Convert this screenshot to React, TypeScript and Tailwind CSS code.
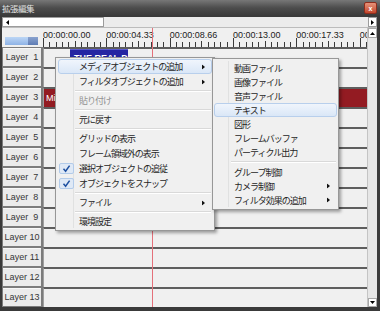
import React from "react";

type Item =
  | "sep"
  | { t: string; sub?: boolean; hl?: boolean; dis?: boolean; chk?: boolean };

const mainItems: Item[] = [
  { t: "メディアオブジェクトの追加", sub: true, hl: true },
  { t: "フィルタオブジェクトの追加", sub: true },
  "sep",
  { t: "貼り付け", dis: true },
  "sep",
  { t: "元に戻す" },
  "sep",
  { t: "グリッドの表示" },
  { t: "フレーム領域外の表示" },
  { t: "選択オブジェクトの追従", chk: true },
  { t: "オブジェクトをスナップ", chk: true },
  "sep",
  { t: "ファイル", sub: true },
  "sep",
  { t: "環境設定" },
];

const subItems: Item[] = [
  { t: "動画ファイル" },
  { t: "画像ファイル" },
  { t: "音声ファイル" },
  { t: "テキスト", hl: true },
  { t: "図形" },
  { t: "フレームバッファ" },
  { t: "パーティクル出力" },
  "sep",
  { t: "グループ制御" },
  { t: "カメラ制御", sub: true },
  { t: "フィルタ効果の追加", sub: true },
];

function Arrow() {
  return (
    <svg width="3" height="5" className="absolute right-[6px] top-1/2 -translate-y-1/2">
      <polygon points="0,0 3,2.5 0,5" fill="#111" />
    </svg>
  );
}

function Check() {
  return (
    <div className="absolute left-0 top-[1px] bottom-[1px] w-[15px] rounded-[2px] bg-[#dfe9f6] border border-[#b2cbea] flex items-center justify-center">
      <svg width="9" height="9" viewBox="0 0 9 9">
        <path d="M1.5 4.8 L3.6 7.2 L7.6 1.6" stroke="#1d4fa0" strokeWidth="1.5" fill="none" />
      </svg>
    </div>
  );
}

function MenuList({ items, h, sepH, pl, gutter }: { items: Item[]; h: string; sepH: string; pl: string; gutter: string }) {
  return (
    <>
      <div className={`absolute ${gutter} top-[2px] bottom-[2px] w-[1px] bg-[#e0e1e1]`} />
      {items.map((it, i) =>
        it === "sep" ? (
          <div key={i} className={`relative ${sepH} flex items-center ml-[17px] mr-[1px]`}>
            <div className="w-full h-[1px] bg-[#d9d9d9] border-b border-white box-content" />
          </div>
        ) : (
          <div
            key={i}
            className={`relative ${h} flex items-center ${pl} whitespace-nowrap ${
              it.hl ? "bg-gradient-to-b from-[#f0f5fc] to-[#dae7f7] border border-[#b8cfec] rounded-[3px]" : "border border-transparent"
            } ${it.dis ? "text-[#939393]" : "text-[#262626]"}`}
          >
            {it.chk && <Check />}
            <span className="text-[9px] leading-none tracking-[-1px]">{it.t}</span>
            {it.sub && <Arrow />}
          </div>
        )
      )}
    </>
  );
}

const labels = ["00:00:00.00", "00:00:04.33", "00:00:08.66", "00:00:13.00", "00:00:17.33", "00:00:21.66"];

function Ticks() {
  const lines = [];
  for (let i = 0; i <= 52; i++) {
    const x = Math.round(i * 6.333) + 0.5;
    const major = i % 10 === 0;
    const mid = i % 5 === 0;
    lines.push(<line key={i} x1={x} x2={x} y1={major ? 10 : mid ? 13 : 14} y2={19} stroke="#3a3a3a" strokeWidth="1" />);
  }
  return (
    <svg width="324" height="19" className="absolute left-0 top-0">
      {lines}
    </svg>
  );
}

export default function App() {
  const layers = Array.from({ length: 13 }, (_, i) => i + 1);
  return (
    <div className="w-[380px] h-[311px] relative overflow-hidden bg-[#3a3a3a] flex flex-col font-['Liberation_Sans',Arial,sans-serif]">
      {/* title bar */}
      <div className="h-[16px] shrink-0 flex items-center bg-gradient-to-b from-[#777777] via-[#4c4c4c] to-[#3a3a3a]">
        <span className="ml-[2px] text-[8.5px] leading-none text-[#e2e2e2] font-['Noto_Sans_CJK_JP',sans-serif] tracking-[-0.5px]">
          拡張編集
        </span>
        <div className="ml-auto mr-[3px] w-[13px] h-[12px] rounded-[2px] bg-gradient-to-b from-[#e69279] to-[#c2452b] border border-[#8e2c1c] flex items-center justify-center text-white text-[7px] leading-none font-bold">
          x
        </div>
      </div>

      <div className="flex-1 flex flex-col pt-[1px] pl-[2px] pr-[3px] pb-[4px]">
        {/* top horizontal scrollbar */}
        <div className="h-[11px] shrink-0 flex bg-[#ececec] border-b border-[#bcbcbc]">
          <div className="w-[102px] h-full bg-white border border-[#9c9c9c] flex items-center pl-[3px]">
            <svg width="3" height="5">
              <polygon points="3,0 3,5 0,2.5" fill="#000" />
            </svg>
          </div>
          <div className="flex-1" />
          <div className="w-[9px] h-full bg-white border border-[#9c9c9c] flex items-center justify-center">
            <svg width="3" height="5">
              <polygon points="0,0 3,2.5 0,5" fill="#000" />
            </svg>
          </div>
        </div>

        <div className="flex-1 flex">
          <div className="w-[365px] flex flex-col relative">
            {/* ruler */}
            <div className="h-[19px] shrink-0 flex">
              <div className="w-[41px] bg-[#f0f0f0] flex items-start pt-[9px] pl-[3px]">
                <div className="w-[23px] h-[8px] bg-gradient-to-b from-[#bcd6f5] to-[#8fb3e6]" />
                <div className="w-[10px] h-[8px] bg-gradient-to-b from-[#8aa3cf] to-[#5f7db5]" />
              </div>
              <div className="flex-1 relative bg-[#f0f0f0] overflow-hidden">
                <Ticks />
                <div className="relative flex pt-[2px]">
                  {labels.map((l) => (
                    <div key={l} className="w-[63.33px] shrink-0 text-[9px] leading-[10px] text-[#1c1c1c] whitespace-nowrap">
                      {l}
                    </div>
                  ))}
                </div>
              </div>
            </div>

            {/* layers */}
            {layers.map((n) => (
              <div key={n} className="h-[20px] shrink-0 flex">
                <div className="w-[41px] bg-[#7c7c7c] pl-[1px] pr-[2px] py-[1px]">
                  <div className="h-full bg-[#ebebeb] border-t border-[#f8f8f8] flex items-center justify-center text-[9px] leading-none text-[#363636] whitespace-pre">
                    {n < 10 ? `Layer  ${n}` : `Layer ${n}`}
                  </div>
                </div>
                <div className="flex-1 relative bg-[#f0f0f0] border-t-2 border-t-[#5e5e5e] border-l border-l-[#a0a0a0]">
                  {n === 1 && (
                    <div className="absolute left-[26px] top-0 w-[58px] h-[17px] bg-[#2424a2] border-t border-[#5a5ad0] flex items-center pl-[4px] overflow-hidden">
                      <span className="text-[9px] leading-none text-white font-bold whitespace-nowrap">THE REAL DEA</span>
                    </div>
                  )}
                  {n === 3 && (
                    <div className="absolute inset-0 bg-[#931b22] flex items-center pl-[2px] overflow-hidden">
                      <span className="text-[9px] leading-none text-white whitespace-nowrap">Mi</span>
                    </div>
                  )}
                </div>
              </div>
            ))}

            {/* cursor */}
            <div className="absolute left-[150px] top-0 bottom-0 w-[1px] bg-[#e4707a]" />
          </div>

          {/* vertical scrollbar */}
          <div className="flex-1 flex flex-col bg-[#e6e6e6] border-l border-[#c4c4c4]">
            <div className="h-[10px] bg-white border border-[#a8a8a8] flex items-center justify-center">
              <svg width="5" height="3">
                <polygon points="0,3 5,3 2.5,0" fill="#000" />
              </svg>
            </div>
            <div className="flex-1" />
            <div className="h-[9px] bg-white border border-[#a8a8a8] flex items-center justify-center">
              <svg width="5" height="3">
                <polygon points="0,0 5,0 2.5,3" fill="#000" />
              </svg>
            </div>
          </div>
        </div>
      </div>

      {/* main context menu */}
      <div className="absolute left-[55px] top-[57px] w-[160px] bg-[#f0f0f0] border border-[#979797] shadow-[2px_2px_3px_rgba(0,0,0,0.35)] pt-[1px] pb-[1px] px-[2px] font-['Noto_Sans_CJK_JP',sans-serif]">
        <MenuList items={mainItems} h="h-[15px]" sepH="h-[4px]" pl="pl-[20px]" gutter="left-[17px]" />
      </div>

      {/* submenu */}
      <div className="absolute left-[212px] top-[58px] w-[127px] bg-[#f0f0f0] border border-[#979797] shadow-[2px_2px_3px_rgba(0,0,0,0.35)] pt-[2px] pb-[2px] px-[1px] font-['Noto_Sans_CJK_JP',sans-serif]">
        <MenuList items={subItems} h="h-[14px]" sepH="h-[6px]" pl="pl-[19px]" gutter="left-[15px]" />
      </div>
    </div>
  );
}
